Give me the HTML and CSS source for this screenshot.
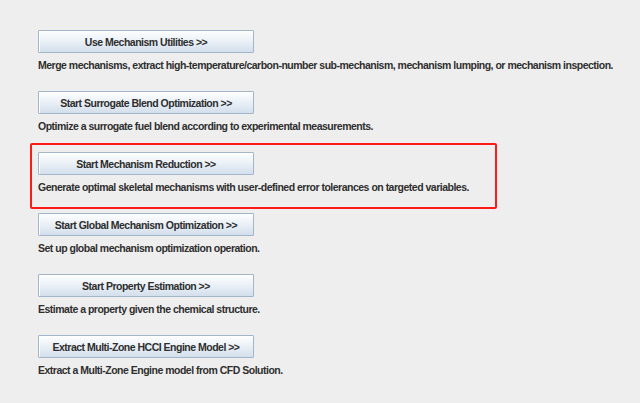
FILE: index.html
```html
<!DOCTYPE html>
<html>
<head>
<meta charset="utf-8">
<link rel="stylesheet" href="styles.css">
</head>
<body>
<div class="panel">
  <div class="item">
    <button class="btn">Use Mechanism Utilities &gt;&gt;</button>
    <div class="desc">Merge mechanisms, extract high-temperature/carbon-number sub-mechanism, mechanism lumping, or mechanism inspection.</div>
  </div>
  <div class="item">
    <button class="btn">Start Surrogate Blend Optimization &gt;&gt;</button>
    <div class="desc">Optimize a surrogate fuel blend according to experimental measurements.</div>
  </div>
  <div class="item hl">
    <button class="btn">Start Mechanism Reduction &gt;&gt;</button>
    <div class="desc">Generate optimal skeletal mechanisms with user-defined error tolerances on targeted variables.</div>
  </div>
  <div class="item">
    <button class="btn">Start Global Mechanism Optimization &gt;&gt;</button>
    <div class="desc">Set up global mechanism optimization operation.</div>
  </div>
  <div class="item">
    <button class="btn">Start Property Estimation &gt;&gt;</button>
    <div class="desc">Estimate a property given the chemical structure.</div>
  </div>
  <div class="item">
    <button class="btn">Extract Multi-Zone HCCI Engine Model &gt;&gt;</button>
    <div class="desc">Extract a Multi-Zone Engine model from CFD Solution.</div>
  </div>
</div>
</body>
</html>
```

FILE: styles.css
```css
html, body {
  margin: 0;
  padding: 0;
  background: #eeeeee;
  width: 640px;
  height: 403px;
  overflow: hidden;
}
.panel {
  padding: 30px 0 0 38px;
  display: flex;
  flex-direction: column;
  align-items: flex-start;
  font-family: "Liberation Sans", Arial, sans-serif;
  font-weight: bold;
  font-size: 10.5px;
  letter-spacing: -0.5px;
  color: #2e2e2e;
}
.item {
  display: flex;
  flex-direction: column;
  align-items: flex-start;
  margin-bottom: 19px;
}
.btn {
  width: 216px;
  height: 23px;
  margin: 0;
  padding: 0;
  border: 1px solid #a3b5c8;
  border-radius: 1px;
  background: linear-gradient(to bottom, #fdfefe 0%, #eef3f8 40%, #d3dfec 100%);
  box-shadow: inset 1px 1px 0 #ffffff;
  font-family: "Liberation Sans", Arial, sans-serif;
  font-weight: bold;
  font-size: 10.5px;
  letter-spacing: -0.5px;
  color: #2e2e2e;
  text-align: center;
}
.desc {
  margin-top: 6px;
  line-height: 13px;
  white-space: nowrap;
}
.item.hl {
  box-sizing: border-box;
  width: 467px;
  margin: -9px 0 4px -8px;
  padding: 7px 0 13px 6px;
  border: 2px solid #ff1a1a;
  border-radius: 2px;
}
```
